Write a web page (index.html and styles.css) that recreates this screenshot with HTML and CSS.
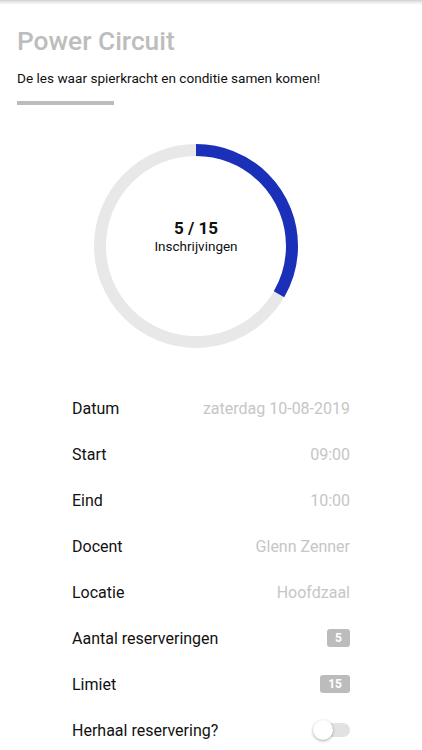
FILE: index.html
```
<!DOCTYPE html>
<html lang="nl">
<head>
<meta charset="utf-8">
<title>Power Circuit</title>
<link rel="stylesheet" href="styles.css">
</head>
<body>
<div class="topshadow"></div>
<main class="page">
  <header class="intro">
    <h1 class="title">Power Circuit</h1>
    <p class="subtitle">De les waar spierkracht en conditie samen komen!</p>
    <div class="rule"></div>
  </header>

  <section class="chart">
    <div class="ring">
      <svg width="204" height="204" viewBox="0 0 204 204">
        <circle cx="102" cy="102" r="96" fill="none" stroke="#e8e8e8" stroke-width="12"/>
        <circle cx="102" cy="102" r="96" fill="none" stroke="#1a30b8" stroke-width="12"
                stroke-dasharray="201.06 603.19" transform="rotate(-90 102 102)"/>
      </svg>
      <div class="ring-label">
        <div class="count">5 / 15</div>
        <div class="caption">Inschrijvingen</div>
      </div>
    </div>
  </section>

  <section class="details">
    <div class="row"><span class="label">Datum</span><span class="value">zaterdag 10-08-2019</span></div>
    <div class="row"><span class="label">Start</span><span class="value">09:00</span></div>
    <div class="row"><span class="label">Eind</span><span class="value">10:00</span></div>
    <div class="row"><span class="label">Docent</span><span class="value">Glenn Zenner</span></div>
    <div class="row"><span class="label">Locatie</span><span class="value">Hoofdzaal</span></div>
    <div class="row"><span class="label">Aantal reserveringen</span><span class="badge">5</span></div>
    <div class="row"><span class="label">Limiet</span><span class="badge">15</span></div>
    <div class="row"><span class="label">Herhaal reservering?</span><span class="toggle"><span class="thumb"></span></span></div>
  </section>
</main>
</body>
</html>
```
FILE: styles.css
```
html, body {
  margin: 0;
  padding: 0;
  background: #ffffff;
}

body {
  font-family: Roboto, "Noto Sans", "Liberation Sans", sans-serif;
  color: #111111;
  width: 422px;
  height: 750px;
  overflow: hidden;
  position: relative;
}

.topshadow {
  height: 5px;
  background: linear-gradient(to bottom, #cfcfcf 0%, #e9e9e9 40%, #ffffff 100%);
}

.page {
  display: flex;
  flex-direction: column;
}

.intro {
  padding: 21px 17px 0 17px;
}

.title {
  margin: 0;
  font-size: 26.3px;
  line-height: 30px;
  font-weight: 500;
  color: #bdbdbd;
}

.subtitle {
  margin: 13px 0 0 0;
  font-size: 13.6px;
  line-height: 18px;
  color: #111111;
}

.rule {
  margin-top: 14px;
  width: 97px;
  height: 4px;
  background: #bdbbbb;
}

.chart {
  padding: 39px 0 0 94px;
}

.ring {
  position: relative;
  width: 204px;
  height: 204px;
}

.ring svg {
  display: block;
}

.ring-label {
  position: absolute;
  inset: 0;
  display: flex;
  flex-direction: column;
  align-items: center;
  justify-content: center;
  padding-bottom: 20px;
  box-sizing: border-box;
}

.count {
  font-size: 17px;
  line-height: 19px;
  font-weight: 700;
  color: #111111;
}

.caption {
  font-size: 13.5px;
  line-height: 16px;
  color: #111111;
}

.details {
  margin: 38px 0 0 72px;
  width: 278px;
  display: flex;
  flex-direction: column;
}

.row {
  height: 45.9px;
  display: flex;
  align-items: center;
  justify-content: space-between;
}

.label {
  font-size: 16px;
  color: #111111;
}

.value {
  font-size: 16px;
  color: #c6c6c6;
}

.badge {
  height: 18px;
  line-height: 18px;
  padding: 0 8px;
  border-radius: 3px;
  background: #bdbcbc;
  color: #ffffff;
  font-size: 12px;
  font-weight: 700;
}

.toggle {
  position: relative;
  width: 35px;
  height: 14px;
  border-radius: 7px;
  background: #e2e2e2;
}

.thumb {
  position: absolute;
  left: -2px;
  top: -3px;
  width: 20px;
  height: 20px;
  border-radius: 50%;
  background: #ffffff;
  box-shadow: 0 1px 3px rgba(0, 0, 0, 0.35);
}
```
